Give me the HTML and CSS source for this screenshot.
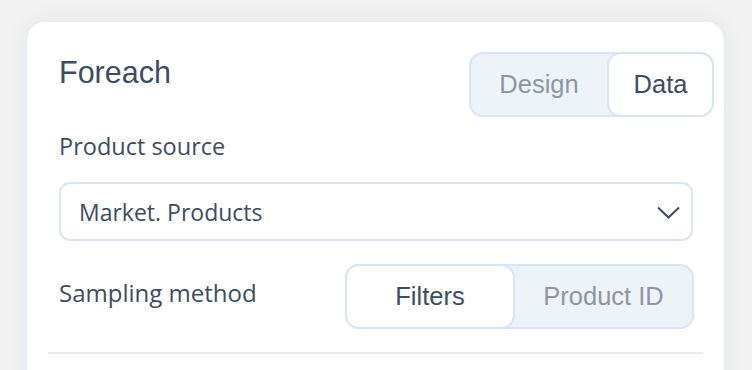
FILE: index.html
```html
<!DOCTYPE html>
<html lang="en">
<head>
<meta charset="utf-8">
<title>Foreach</title>
<link rel="stylesheet" href="styles.css">
</head>
<body>
<div class="card">
  <div class="header">
    <h1 class="title">Foreach</h1>
    <div class="toggle">
      <button class="seg seg-design">Design</button>
      <button class="seg seg-data active">Data</button>
    </div>
  </div>
  <label class="label">Product source</label>
  <div class="select">
    <span class="select-text">Market. Products</span>
    <svg class="chev" width="23" height="13" viewBox="0 0 23 13"><path d="M1 1.5 L11.5 11.5 L22 1.5" fill="none" stroke="#3d4d5f" stroke-width="2"/></svg>
  </div>
  <div class="row">
    <span class="label row-label">Sampling method</span>
    <div class="toggle toggle-wide">
      <button class="seg seg-filters active">Filters</button>
      <button class="seg seg-pid">Product ID</button>
    </div>
  </div>
  <div class="divider"></div>
</div>
</body>
</html>
```
FILE: styles.css
```css
html, body {
  margin: 0;
  padding: 0;
  background: #f2f2f2;
  height: 100%;
  overflow: hidden;
}
body {
  padding: 20px 26px 0 25px;
  box-sizing: border-box;
}
.card {
  background: #ffffff;
  border: 2px solid #e6edf7;
  border-radius: 20px;
  padding: 30px 32px 40px 32px;
  box-shadow: 0 -2px 24px rgba(0, 0, 0, 0.04);
  height: 400px;
  box-sizing: border-box;
}
.header {
  display: flex;
  justify-content: space-between;
  align-items: flex-start;
}
.title {
  margin: 5px 0 0 0;
  font-family: "Liberation Sans", Arial, sans-serif;
  font-weight: 400;
  font-size: 30.5px;
  line-height: 30px;
  color: #3d4d5f;
}
.toggle {
  display: flex;
  height: 65px;
  box-sizing: border-box;
  border: 2px solid #d6e6f6;
  border-radius: 14px;
  background: #eef3f8;
  margin-right: -22px;
}
.seg {
  font-family: "Liberation Sans", Arial, sans-serif;
  font-size: 25.5px;
  color: #8c97a4;
  background: transparent;
  border: 2px solid transparent;
  border-radius: 12px;
  padding: 0;
  height: 61px;
  box-sizing: border-box;
  margin: 0;
  cursor: pointer;
}
.seg.active {
  background: #ffffff;
  border-color: #d6e6f6;
  color: #3d4d5f;
  height: 65px;
  margin-top: -2px;
  margin-bottom: -2px;
  border-radius: 14px;
}
.seg-design { width: 136px; }
.seg-data { width: 107px; margin-right: -2px; }
.toggle-wide { margin-right: -2px; }
.seg-filters { width: 170px; margin-left: -2px; }
.seg-pid { width: 177px; }
.label {
  display: block;
  margin-top: 13px;
  font-family: "Open Sans", "Noto Sans", sans-serif;
  font-size: 23.5px;
  line-height: 32px;
  color: #3d4d5f;
}
.select {
  margin-top: 20px;
  height: 59px;
  box-sizing: border-box;
  border: 2px solid #d6e6f6;
  border-radius: 11px;
  display: flex;
  align-items: center;
  justify-content: space-between;
  padding: 0 11px 0 18px;
  margin-right: -1px;
}
.select-text {
  font-family: "Open Sans", "Noto Sans", sans-serif;
  font-size: 23px;
  color: #3d4d5f;
}
.chev { display: block; margin-top: 1px; }
.row {
  margin-top: 23px;
  display: flex;
  justify-content: space-between;
  align-items: center;
}
.row-label { margin-top: -8px; font-size: 24px; }
.divider {
  margin: 23px -11px 0 -11px;
  height: 2px;
  background: #e6ecf4;
}
```
